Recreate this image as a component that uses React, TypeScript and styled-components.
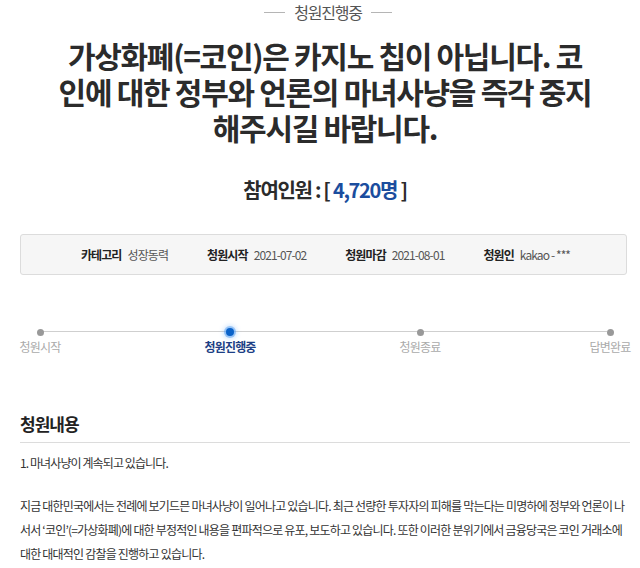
import React from "react";
import styled, { createGlobalStyle } from "styled-components";

const GlobalStyle = createGlobalStyle`
  html, body { margin: 0; padding: 0; background: #fff; }
  body {
    font-family: "Noto Sans CJK KR", "Noto Sans", sans-serif;
    color: #333;
  }
`;

const Page = styled.div`
  width: 640px;
  box-sizing: border-box;
  padding: 0 10px 0 20px;
`;

const StatusHeader = styled.div`
  display: flex;
  align-items: center;
  justify-content: center;
  gap: 9px;
  height: 24px;
  font-size: 16px;
  letter-spacing: -1.2px;
  color: #555;
  padding-left: 6px;
`;

const Rule = styled.span`
  display: block;
  width: 21px;
  height: 1px;
  background: #b5b5b5;
`;

const Title = styled.h1`
  margin: 13px auto 0;
  width: 537px;
  font-size: 30px;
  line-height: 36px;
  letter-spacing: -1.3px;
  font-weight: 700;
  color: #2b2b2b;
  text-align: center;
  word-break: normal;
`;

const Count = styled.div`
  margin-top: 30px;
  height: 30px;
  line-height: 30px;
  text-align: center;
  font-size: 20px;
  font-weight: 700;
  letter-spacing: -1.3px;
  color: #2b2b2b;
`;

const CountNumber = styled.span`
  color: #1b4d9e;
`;

const InfoBox = styled.div`
  margin-top: 29px;
  width: 607px;
  height: 41px;
  box-sizing: border-box;
  background: #f6f6f6;
  border: 1px solid #dcdcdc;
  border-radius: 3px;
  display: flex;
  align-items: center;
  justify-content: center;
  gap: 39px;
  padding-left: 4px;
`;

const InfoItem = styled.div`
  display: flex;
  align-items: center;
  gap: 6px;
  font-size: 12px;
  letter-spacing: -0.9px;
`;

const InfoLabel = styled.span`
  font-weight: 700;
  color: #222;
`;

const InfoValue = styled.span`
  color: #555;
`;

const Progress = styled.div`
  margin-top: 50px;
  position: relative;
  display: flex;
  justify-content: space-between;
`;

const Track = styled.div`
  position: absolute;
  left: 20px;
  right: 23px;
  top: 6px;
  height: 1px;
  background: #cfcfcf;
`;

const Step = styled.div`
  width: 40px;
  display: flex;
  flex-direction: column;
  align-items: center;
  position: relative;
`;

const DotWrap = styled.div`
  height: 14px;
  display: flex;
  align-items: center;
  justify-content: center;
`;

const Dot = styled.span<{ $active?: boolean }>`
  display: block;
  width: ${(p) => (p.$active ? "8px" : "7px")};
  height: ${(p) => (p.$active ? "8px" : "7px")};
  border-radius: 50%;
  background: ${(p) => (p.$active ? "#0a62c9" : "#999")};
  box-shadow: ${(p) =>
    p.$active ? "0 0 0 2px rgba(70,150,240,0.45), 0 0 4px 3px rgba(120,180,250,0.35)" : "none"};
`;

const StepLabel = styled.span<{ $active?: boolean }>`
  white-space: nowrap;
  line-height: 16px;
  font-size: 12px;
  letter-spacing: -0.8px;
  font-weight: ${(p) => (p.$active ? 700 : 400)};
  color: ${(p) => (p.$active ? "#1d3f85" : "#aaa")};
`;

const SectionTitle = styled.h2`
  margin: 56px 0 0;
  font-size: 17px;
  line-height: 26px;
  font-weight: 700;
  letter-spacing: -1px;
  color: #222;
  padding-bottom: 5px;
  border-bottom: 1px solid #dcdcdc;
`;

const Lead = styled.p`
  margin: 8px 0 0;
  font-size: 12px;
  line-height: 24px;
  letter-spacing: -0.9px;
  color: #333;
`;

const Body = styled.p`
  margin: 19px 0 0;
  font-size: 12px;
  line-height: 24px;
  letter-spacing: -0.8px;
  color: #333;
`;

const info = [
  { label: "카테고리", value: "성장동력" },
  { label: "청원시작", value: "2021-07-02" },
  { label: "청원마감", value: "2021-08-01" },
  { label: "청원인", value: "kakao - ***" },
];

const steps = ["청원시작", "청원진행중", "청원종료", "답변완료"];

export default function App() {
  return (
    <>
      <GlobalStyle />
      <Page>
        <StatusHeader>
          <Rule />
          청원진행중
          <Rule />
        </StatusHeader>
        <Title>
          가상화폐(=코인)은 카지노 칩이 아닙니다. 코인에 대한 정부와 언론의 마녀사냥을 즉각 중지
          해주시길 바랍니다.
        </Title>
        <Count>
          참여인원 : [ <CountNumber>4,720명</CountNumber> ]
        </Count>
        <InfoBox>
          {info.map((i) => (
            <InfoItem key={i.label}>
              <InfoLabel>{i.label}</InfoLabel>
              <InfoValue>{i.value}</InfoValue>
            </InfoItem>
          ))}
        </InfoBox>
        <Progress>
          <Track />
          {steps.map((s, idx) => (
            <Step key={s}>
              <DotWrap>
                <Dot $active={idx === 1} />
              </DotWrap>
              <StepLabel $active={idx === 1}>{s}</StepLabel>
            </Step>
          ))}
        </Progress>
        <SectionTitle>청원내용</SectionTitle>
        <Lead>1. 마녀사냥이 계속되고 있습니다.</Lead>
        <Body>
          지금 대한민국에서는 전례에 보기드믄 마녀사냥이 일어나고 있습니다. 최근 선량한 투자자의 피해를
          막는다는 미명하에 정부와 언론이 나서서 ‘코인’(=가상화폐)에 대한 부정적인 내용을 편파적으로
          유포, 보도하고 있습니다. 또한 이러한 분위기에서 금융당국은 코인 거래소에 대한 대대적인 감찰을
          진행하고 있습니다.
        </Body>
      </Page>
    </>
  );
}
